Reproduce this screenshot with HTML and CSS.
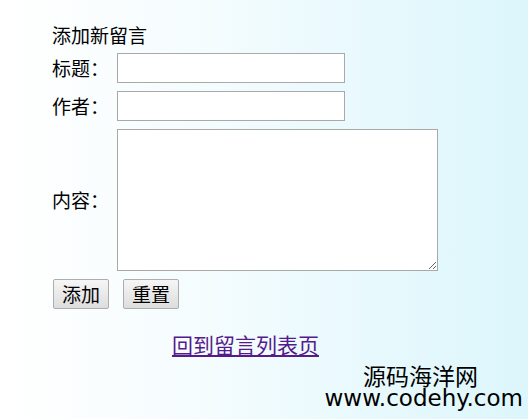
FILE: index.html
```html
<!DOCTYPE html>
<html lang="zh-CN">
<head>
    <meta charset="UTF-8">
    <title>添加新留言</title>
    <link rel="stylesheet" href="styles.css">
</head>
<body>
    <form class="msg-form">
        <div class="form-title">添加新留言</div>
        <div class="form-row">
            <label for="title">标题：</label>
            <input type="text" id="title" class="text-input">
        </div>
        <div class="form-row">
            <label for="author">作者：</label>
            <input type="text" id="author" class="text-input">
        </div>
        <div class="form-row">
            <label for="content">内容：</label>
            <textarea id="content" class="text-area"></textarea>
        </div>
        <div class="form-actions">
            <button type="button" class="btn">添加</button>
            <button type="reset" class="btn">重置</button>
        </div>
        <div class="back-link">
            <a href="#">回到留言列表页</a>
        </div>
    </form>
    <div class="watermark">
        <div class="wm-name">源码海洋网</div>
        <div class="wm-url">www.codehy.com</div>
    </div>
</body>
</html>
```

FILE: styles.css
```css
html, body {
    height: 100%;
}

body {
    margin: 0;
    font-family: "Noto Sans CJK SC", sans-serif;
    color: #000;
    background: linear-gradient(to right, #ffffff 0%, #f4fcfe 40%, #dcf6fc 100%);
    position: relative;
    overflow: hidden;
}

.msg-form {
    display: flex;
    flex-direction: column;
    gap: 8px;
    padding: 24px 0 0 52px;
}

.form-title {
    font-size: 19px;
    line-height: 21px;
}

.form-row {
    display: flex;
    align-items: center;
}

.form-row label {
    width: 65px;
    font-size: 19px;
    line-height: 22px;
}

.text-input {
    box-sizing: border-box;
    width: 228px;
    height: 30px;
    margin: 0;
    border: 1px solid #a9a9a9;
    background: #fff;
}

.text-area {
    box-sizing: border-box;
    width: 321px;
    height: 142px;
    margin: 0;
    border: 1px solid #a9a9a9;
    background: #fff;
}

.form-actions {
    display: flex;
    gap: 14px;
    margin-left: 1px;
}

.btn {
    box-sizing: border-box;
    width: 56px;
    height: 30px;
    padding: 0;
    font-family: "Noto Sans CJK SC", sans-serif;
    font-size: 19px;
    line-height: 26px;
    color: #000;
    border: 1px solid #adadad;
    border-radius: 2px;
    background: linear-gradient(#f6f6f6, #dddddd);
}

.back-link {
    padding: 15px 0 0 120px;
    font-size: 21px;
    line-height: 24px;
}

.back-link a {
    color: #551a8b;
}

.watermark {
    position: absolute;
    right: 5px;
    bottom: 9px;
    text-align: right;
}

.wm-name {
    font-size: 23px;
    line-height: 22px;
    margin-right: 45px;
}

.wm-url {
    font-family: "DejaVu Sans", sans-serif;
    font-size: 23px;
    line-height: 24px;
}
```
